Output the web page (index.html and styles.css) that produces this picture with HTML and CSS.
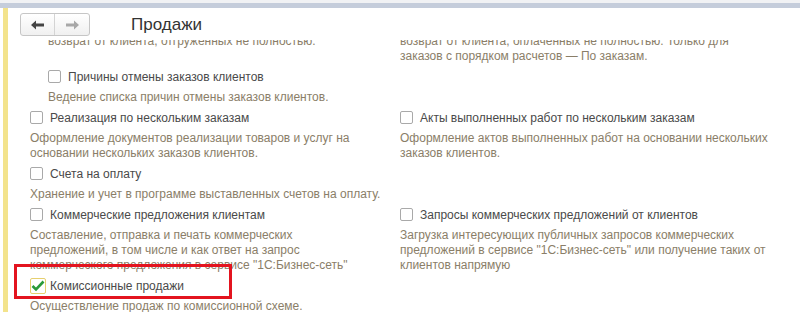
FILE: index.html
```html
<!DOCTYPE html>
<html lang="ru">
<head>
  <meta charset="UTF-8">
  <title>Продажи</title>
  <link rel="stylesheet" href="styles.css">
</head>
<body>
  <div class="topbar"></div>
  <div class="window">
    <div class="header">
      <div class="nav">
        <button class="nav-btn back">
          <svg width="14" height="10" viewBox="0 0 14 10"><path d="M0 5 L5 0.5 V3.5 H13 V6.5 H5 V9.5 Z" fill="#444"/></svg>
        </button>
        <button class="nav-btn fwd">
          <svg width="14" height="10" viewBox="0 0 14 10"><path d="M14 5 L9 0.5 V3.5 H1 V6.5 H9 V9.5 Z" fill="#a8a8a8"/></svg>
        </button>
      </div>
      <h1>Продажи</h1>
    </div>
    <div class="scroll">
      <div class="grid">
        <div class="cell sub top-cut">
          <p class="desc">возврат от клиента, отгруженных не полностью.</p>
        </div>
        <div class="cell right top-cut">
          <p class="desc">возврат от клиента, оплаченных не полностью. Только для<br>заказов с порядком расчетов — По заказам.</p>
        </div>

        <div class="cell sub">
          <label class="check"><span class="box"></span>Причины отмены заказов клиентов</label>
          <p class="desc">Ведение списка причин отмены заказов клиентов.</p>
        </div>
        <div class="cell right"></div>

        <div class="cell">
          <label class="check"><span class="box"></span>Реализация по нескольким заказам</label>
          <p class="desc">Оформление документов реализации товаров и услуг на<br>основании нескольких заказов клиентов.</p>
        </div>
        <div class="cell right">
          <label class="check"><span class="box"></span>Акты выполненных работ по нескольким заказам</label>
          <p class="desc">Оформление актов выполненных работ на основании нескольких<br>заказов клиентов.</p>
        </div>

        <div class="cell">
          <label class="check"><span class="box"></span>Счета на оплату</label>
          <p class="desc">Хранение и учет в программе выставленных счетов на оплату.</p>
        </div>
        <div class="cell right"></div>

        <div class="cell">
          <label class="check"><span class="box"></span>Коммерческие предложения клиентам</label>
          <p class="desc">Составление, отправка и печать коммерческих<br>предложений, в том числе и как ответ на запрос<br>коммерческого предложения в сервисе "1С:Бизнес-сеть"</p>
        </div>
        <div class="cell right">
          <label class="check"><span class="box"></span>Запросы коммерческих предложений от клиентов</label>
          <p class="desc">Загрузка интересующих публичных запросов коммерческих<br>предложений в сервисе "1С:Бизнес-сеть" или получение таких от<br>клиентов напрямую</p>
        </div>

        <div class="cell">
          <label class="check highlighted"><span class="box checked">
            <svg width="14" height="12" viewBox="0 0 14 12"><path d="M1.5 6 L5 9.5 L12.5 1.5" fill="none" stroke="#2a9a3a" stroke-width="2.6"/></svg>
          </span>Комиссионные продажи</label>
          <p class="desc">Осуществление продаж по комиссионной схеме.</p>
        </div>
        <div class="cell right"></div>
      </div>
    </div>
  </div>
</body>
</html>
```

FILE: styles.css
```css
html, body {
  margin: 0;
  padding: 0;
  height: 100%;
  overflow: hidden;
}
body {
  font-family: "Liberation Sans", Arial, sans-serif;
  background: #fff;
  color: #4d4d4d;
}
.topbar {
  height: 3px;
  background: #f1f2f4;
  border-bottom: 5px solid #c5cddb;
}
.window {
  margin-left: 3px;
  border-left: 5px solid #f3e38c;
  height: 304px;
  display: flex;
  flex-direction: column;
}
.header {
  display: flex;
  align-items: flex-start;
  height: 32px;
  flex-shrink: 0;
  padding-left: 12px;
  padding-top: 5px;
  box-sizing: border-box;
}
.nav {
  display: flex;
  height: 21px;
  border: 1px solid #c6c6c6;
  border-radius: 3px;
  background: linear-gradient(#ffffff, #f0f0f0);
}
.nav-btn {
  width: 34px;
  height: 21px;
  border: none;
  background: none;
  padding: 0;
  display: flex;
  align-items: center;
  justify-content: center;
}
.nav-btn.back {
  border-right: 1px solid #d4d4d4;
}
h1 {
  margin: 3px 0 0 41px;
  font-size: 17px;
  line-height: 18px;
  font-weight: normal;
  color: #333;
}
.scroll {
  flex: 1;
  overflow: hidden;
}
.grid {
  display: grid;
  grid-template-columns: 392px 1fr;
  margin-top: -6px;
}
.cell {
  padding-left: 22px;
  padding-bottom: 2px;
}
.cell.sub {
  padding-left: 40px;
}
.cell.right {
  padding-left: 0;
}
.check {
  display: flex;
  align-items: center;
  height: 21px;
  font-size: 12px;
  color: #4a4a4a;
  position: relative;
}
.box {
  width: 13px;
  height: 13px;
  border: 1px solid #a9a9a9;
  border-radius: 2px;
  background: #fff;
  margin-right: 7px;
  box-sizing: border-box;
  flex-shrink: 0;
  display: flex;
  align-items: center;
  justify-content: center;
}
.box.checked {
  width: 16px;
  height: 16px;
  border: 1px solid #e6cf6e;
  margin-right: 4px;
}
.box.checked svg {
  display: block;
}
.highlighted::after {
  content: "";
  position: absolute;
  left: -16px;
  top: -11px;
  width: 212px;
  height: 29px;
  border: 3px solid #e3141f;
}
.desc {
  margin: 3px 0 0;
  font-size: 12px;
  line-height: 15px;
  color: #8a7e68;
}
.top-cut .desc {
  margin-top: 0;
}
```
